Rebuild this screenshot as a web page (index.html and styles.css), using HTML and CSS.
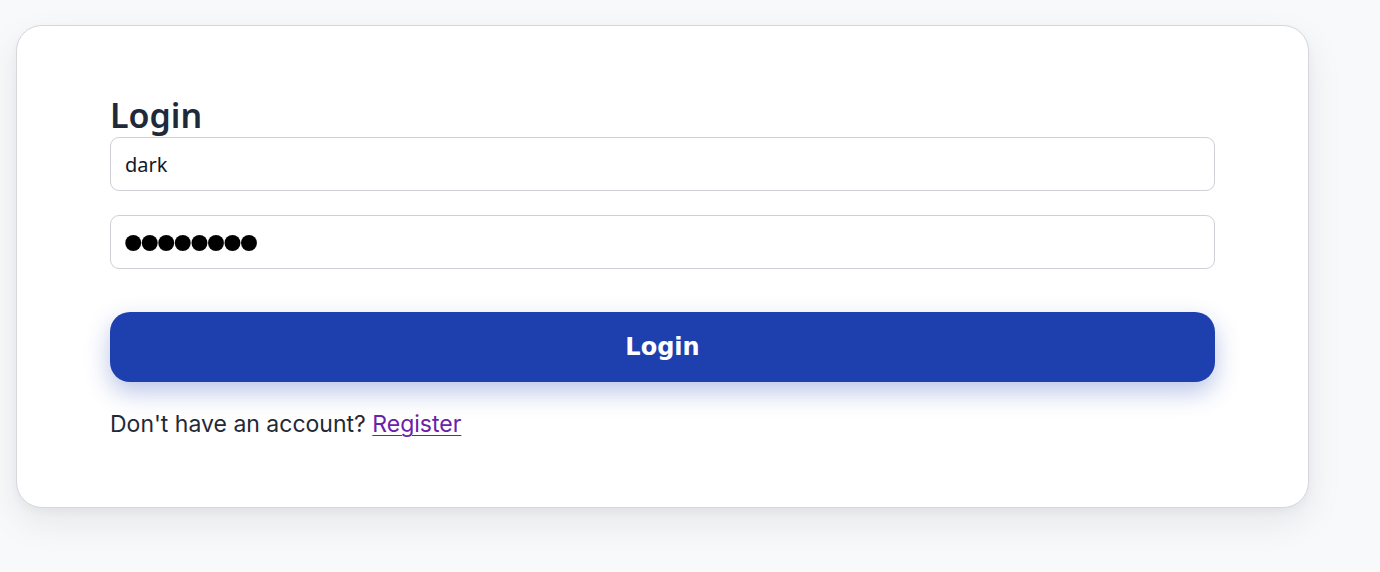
FILE: index.html
```html
<!DOCTYPE html>
<html lang="en">
<head>
<meta charset="utf-8">
<title>Login</title>
<link rel="stylesheet" href="styles.css">
</head>
<body>
<main class="page">
  <section class="card">
    <form class="form">
      <h2 class="title">Login</h2>
      <input class="field" type="text" value="dark">
      <input class="field field-pass" type="password" value="password">
      <button class="btn" type="button">Login</button>
      <p class="note">Don't have an account? <a class="link" href="#register">Register</a></p>
    </form>
  </section>
</main>
</body>
</html>
```
FILE: styles.css
```css
html, body {
  margin: 0;
  padding: 0;
  background: #f8f9fb;
}
.page {
  min-height: 572px;
  box-sizing: border-box;
  padding: 25px 71px 0 16px;
}
.card {
  box-sizing: border-box;
  width: 1293px;
  height: 483px;
  background: #ffffff;
  border: 1px solid #d6d7db;
  border-radius: 26px;
  box-shadow: 0 14px 36px rgba(15, 23, 42, 0.08), 0 4px 10px rgba(15, 23, 42, 0.04);
  padding: 68px 93px 0 93px;
}
.form {
  display: flex;
  flex-direction: column;
}
.title {
  margin: 0;
  font-family: "Noto Sans", sans-serif;
  font-size: 34px;
  font-weight: 600;
  line-height: 43px;
  color: #1e293b;
}
.field {
  box-sizing: border-box;
  height: 54px;
  margin: 0 0 24px 0;
  padding: 0 14px;
  border: 1px solid #cfd1d6;
  border-radius: 9px;
  background: #fff;
  font-family: "Noto Sans", sans-serif;
  font-size: 20px;
  color: #111827;
  outline: none;
}
.field-pass {
  font-family: "DejaVu Sans", sans-serif;
  font-size: 55px;
  letter-spacing: -15.9px;
  padding: 6px 6px 0 6px;
  color: #000;
  margin-bottom: 43px;
}
.btn {
  height: 70px;
  border: none;
  border-radius: 20px;
  background: #1e40af;
  color: #fff;
  font-family: "DejaVu Sans", sans-serif;
  font-weight: 700;
  font-size: 24px;
  box-shadow: 0 10px 24px rgba(30, 64, 175, 0.3);
  cursor: pointer;
}
.note {
  margin: 27px 0 0 0;
  font-family: Inter, sans-serif;
  font-size: 23px;
  line-height: 30px;
  color: #1f2937;
}
.link {
  color: #6b21a8;
  text-decoration: underline;
  text-underline-offset: 3px;
  text-decoration-thickness: 1px;
}
```
